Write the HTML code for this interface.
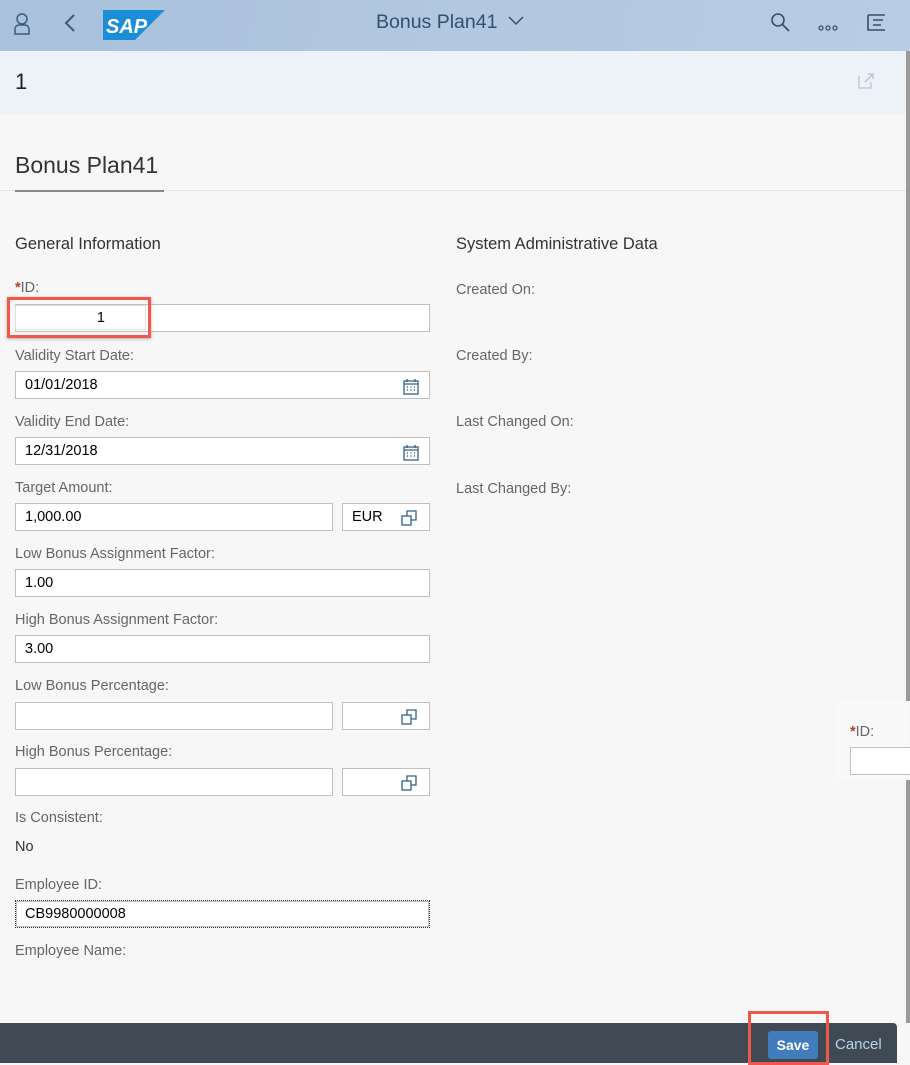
<!DOCTYPE html>
<html><head><meta charset="utf-8"><style>
*{box-sizing:border-box;margin:0;padding:0}
body{width:910px;height:1063px;overflow:hidden;background:#f7f7f7;font-family:"Liberation Sans",Arial,sans-serif;color:#333;position:relative}
.a{position:absolute}
.lbl{position:absolute;left:15px;font-size:14.5px;color:#666;line-height:16px}
.rl{position:absolute;left:456px;font-size:14.5px;color:#666;line-height:16px}
.inp{position:absolute;height:28px;background:#fff;border:1px solid #bfbfbf;font-size:14.5px;color:#000;padding:0 9px;line-height:26px}
.cal{position:absolute;right:10px;top:6px}
.vh{position:absolute;right:12px;top:6px}
</style></head><body>
<div class="a" style="left:0;top:0;width:910px;height:51px;background:linear-gradient(100deg,#a9c1dc 0%,#b3c8e0 55%,#b8cce3 100%)"></div>
<svg class="a" style="left:12px;top:12px" width="20" height="24" viewBox="0 0 20 24"><circle cx="10" cy="7" r="5" fill="none" stroke="#3b5a7d" stroke-width="1.5"/><path d="M3 22V17a4 4 0 0 1 4-4h6a4 4 0 0 1 4 4v5z" fill="none" stroke="#3b5a7d" stroke-width="1.5"/></svg>
<svg class="a" style="left:63px;top:13px" width="14" height="20"><path d="M11 2L3 10l8 8" fill="none" stroke="#3b5a7d" stroke-width="2"/></svg>
<svg class="a" style="left:103px;top:10px" width="62" height="30"><path d="M0 0H62L32 30H0z" fill="#1a8fd8"/><text x="3" y="23" font-family="Liberation Sans" font-weight="bold" font-style="italic" font-size="20" fill="#fff">SAP</text></svg>
<div class="a" style="left:376px;top:11px;font-size:19.5px;color:#34506e">Bonus Plan41</div>
<svg class="a" style="left:507px;top:15px" width="18" height="12"><path d="M2 2l7 7 7-7" fill="none" stroke="#34506e" stroke-width="1.5"/></svg>
<svg class="a" style="left:770px;top:12px" width="22" height="22"><circle cx="8" cy="8" r="6" fill="none" stroke="#34506e" stroke-width="1.6"/><path d="M12.5 12.5L19 19" stroke="#34506e" stroke-width="1.8"/></svg>
<svg class="a" style="left:818px;top:24px" width="20" height="8"><circle cx="3" cy="4" r="2" fill="none" stroke="#34506e" stroke-width="1.2"/><circle cx="10" cy="4" r="2" fill="none" stroke="#34506e" stroke-width="1.2"/><circle cx="17" cy="4" r="2" fill="none" stroke="#34506e" stroke-width="1.2"/></svg>
<svg class="a" style="left:866px;top:13px" width="22" height="20"><path d="M2 2h17M2 2v15h17M7 7h10M7 12h8" fill="none" stroke="#34506e" stroke-width="1.6"/></svg>
<div class="a" style="left:0;top:51px;width:906px;height:63px;background:#edf1f8"></div>
<div class="a" style="left:15px;top:69px;font-size:22px;color:#222">1</div>
<svg class="a" style="left:857px;top:72px" width="18" height="18"><path d="M2 4v12h12V10M8 10l8-8M11 2h5v5" fill="none" stroke="#b8c4d2" stroke-width="1.3"/></svg>
<div class="a" style="left:906px;top:51px;width:4px;height:650px;background:#9a9a9a"></div>
<div class="a" style="left:906px;top:780px;width:4px;height:243px;background:#9a9a9a"></div>
<div class="a" style="left:15px;top:152px;font-size:23px;color:#333">Bonus Plan41</div>
<div class="a" style="left:0;top:190px;width:906px;height:1px;background:#e5e5e5"></div>
<div class="a" style="left:15px;top:190px;width:149px;height:2px;background:#888"></div>
<div class="a" style="left:15px;top:235px;font-size:16.5px;color:#333">General Information</div>
<div class="a" style="left:456px;top:235px;font-size:16.5px;color:#333">System Administrative Data</div>

<div class="lbl" style="top:280px"><span style="color:#c0392b;font-weight:bold">*</span>ID:</div>
<div class="inp" style="left:15px;top:304px;width:415px"></div>
<div class="a" style="left:7px;top:297px;width:144px;height:41px;border:3px solid #f0584a;box-shadow:0 1px 3px rgba(0,0,0,.3)"></div>
<div class="a" style="left:15px;top:305px;width:131px;height:25px;background:#fff;border:1px solid #ddd;text-align:right;padding-right:40px;font-size:14.5px;line-height:24px;color:#000">1</div>

<div class="lbl" style="top:348px">Validity Start Date:</div>
<div class="inp" style="left:15px;top:371px;width:415px">01/01/2018<svg class="cal" width="16" height="17"><rect x="1" y="3" width="14" height="13" fill="none" stroke="#346187" stroke-width="1.3"/><path d="M1 6h14M4 1v3M12 1v3" stroke="#346187" stroke-width="1.3"/><path d="M4 9h1M7.5 9h1M11 9h1M4 12h1M7.5 12h1M11 12h1" stroke="#346187" stroke-width="1.5"/></svg></div>
<div class="lbl" style="top:414px">Validity End Date:</div>
<div class="inp" style="left:15px;top:437px;width:415px">12/31/2018<svg class="cal" width="16" height="17"><rect x="1" y="3" width="14" height="13" fill="none" stroke="#346187" stroke-width="1.3"/><path d="M1 6h14M4 1v3M12 1v3" stroke="#346187" stroke-width="1.3"/><path d="M4 9h1M7.5 9h1M11 9h1M4 12h1M7.5 12h1M11 12h1" stroke="#346187" stroke-width="1.5"/></svg></div>
<div class="lbl" style="top:480px">Target Amount:</div>
<div class="inp" style="left:15px;top:503px;width:318px">1,000.00</div>
<div class="inp" style="left:342px;top:503px;width:88px">EUR<svg class="vh" width="16" height="16"><rect x="1" y="6" width="9" height="9" fill="none" stroke="#346187" stroke-width="1.3"/><path d="M6 6V1h9v9h-5" fill="none" stroke="#346187" stroke-width="1.3"/></svg></div>
<div class="lbl" style="top:546px">Low Bonus Assignment Factor:</div>
<div class="inp" style="left:15px;top:569px;width:415px">1.00</div>
<div class="lbl" style="top:612px">High Bonus Assignment Factor:</div>
<div class="inp" style="left:15px;top:635px;width:415px">3.00</div>
<div class="lbl" style="top:678px">Low Bonus Percentage:</div>
<div class="inp" style="left:15px;top:702px;width:318px"></div>
<div class="inp" style="left:342px;top:702px;width:88px"><svg class="vh" width="16" height="16"><rect x="1" y="6" width="9" height="9" fill="none" stroke="#346187" stroke-width="1.3"/><path d="M6 6V1h9v9h-5" fill="none" stroke="#346187" stroke-width="1.3"/></svg></div>
<div class="lbl" style="top:744px">High Bonus Percentage:</div>
<div class="inp" style="left:15px;top:768px;width:318px"></div>
<div class="inp" style="left:342px;top:768px;width:88px"><svg class="vh" width="16" height="16"><rect x="1" y="6" width="9" height="9" fill="none" stroke="#346187" stroke-width="1.3"/><path d="M6 6V1h9v9h-5" fill="none" stroke="#346187" stroke-width="1.3"/></svg></div>
<div class="lbl" style="top:810px">Is Consistent:</div>
<div class="a" style="left:15px;top:839px;font-size:14.5px;color:#333">No</div>
<div class="lbl" style="top:877px">Employee ID:</div>
<div class="inp" style="left:15px;top:900px;width:415px;border:1px dotted #333;outline:1px solid #bfbfbf;outline-offset:-2px">CB9980000008</div>
<div class="lbl" style="top:943px">Employee Name:</div>

<div class="rl" style="top:282px">Created On:</div>
<div class="rl" style="top:348px">Created By:</div>
<div class="rl" style="top:414px">Last Changed On:</div>
<div class="rl" style="top:481px">Last Changed By:</div>

<div class="a" style="left:835px;top:702px;width:71px;height:78px;background:#f9f9f9"></div>
<div class="a" style="left:850px;top:724px;font-size:14.5px;color:#666"><span style="color:#c0392b;font-weight:bold">*</span>ID:</div>
<div class="a" style="left:850px;top:747px;width:60px;height:28px;background:#fff;border:1px solid #bfbfbf;border-right:none"></div>

<div class="a" style="left:0;top:1023px;width:897px;height:40px;background:#3f4a55;border-radius:0 4px 0 0"></div>
<div class="a" style="left:768px;top:1031px;width:50px;height:28px;background:#427cbd;border-radius:3px;color:#fff;font-weight:bold;font-size:14px;text-align:center;line-height:28px">Save</div>
<div class="a" style="left:835px;top:1036px;font-size:15px;color:#b9d3f0">Cancel</div>
<div class="a" style="left:748px;top:1011px;width:81px;height:54px;border:3px solid #f0584a"></div>
</body></html>
